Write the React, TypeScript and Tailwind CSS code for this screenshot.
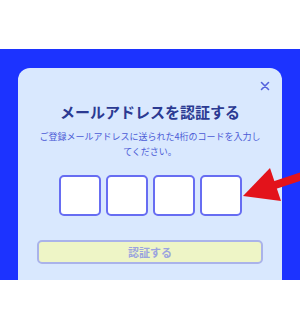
export default function App() {
  const digits = [0, 1, 2, 3];

  return (
    <div
      className="relative h-[327px] w-[300px] overflow-hidden bg-white"
      style={{ fontFamily: '"Noto Sans CJK JP", "Noto Sans", sans-serif' }}
    >
      <div className="h-[49px]" />
      <div className="h-[231px] bg-[#1c33ff] px-[18px] pt-[19px]">
        <div className="relative flex h-[212px] flex-col items-center rounded-t-[12px] bg-[#d9e8fe] px-[19px] pt-[34px]">
          <button className="absolute right-[12px] top-[13px] text-[#5461dc]">
            <svg width="10" height="10" viewBox="0 0 10 10">
              <path d="M1.5 1.5L8.5 8.5M8.5 1.5L1.5 8.5" stroke="currentColor" strokeWidth="1.6" strokeLinecap="round" />
            </svg>
          </button>
          <h1 className="text-[15px] font-bold leading-[20px] text-[#2b3a92]">
            メールアドレスを認証する
          </h1>
          <p className="mt-[7px] text-center text-[9px] leading-[15px] text-[#4b5bd6]">
            ご登録メールアドレスに送られた4桁のコードを入力し
            <br />
            てください。
          </p>
          <div className="mt-[16px] flex gap-[5px]">
            {digits.map((d) => (
              <input
                key={d}
                maxLength={1}
                className="h-[41px] w-[42px] rounded-[5px] border-2 border-[#676df2] bg-white text-center outline-none"
              />
            ))}
          </div>
          <button className="mt-[24px] h-[24px] w-full rounded-[5px] border-2 border-[#aab3ea] bg-[#eef5c6] text-[11px] font-bold text-[#9ba4df]">
            認証する
          </button>
        </div>
      </div>
      <svg
        className="pointer-events-none absolute left-0 top-0"
        width="300"
        height="327"
        viewBox="0 0 300 327"
      >
        <line x1="302" y1="176" x2="266" y2="188" stroke="#e3131b" strokeWidth="8" />
        <polygon points="243,196 270,168 281,201" fill="#e3131b" />
      </svg>
    </div>
  );
}
